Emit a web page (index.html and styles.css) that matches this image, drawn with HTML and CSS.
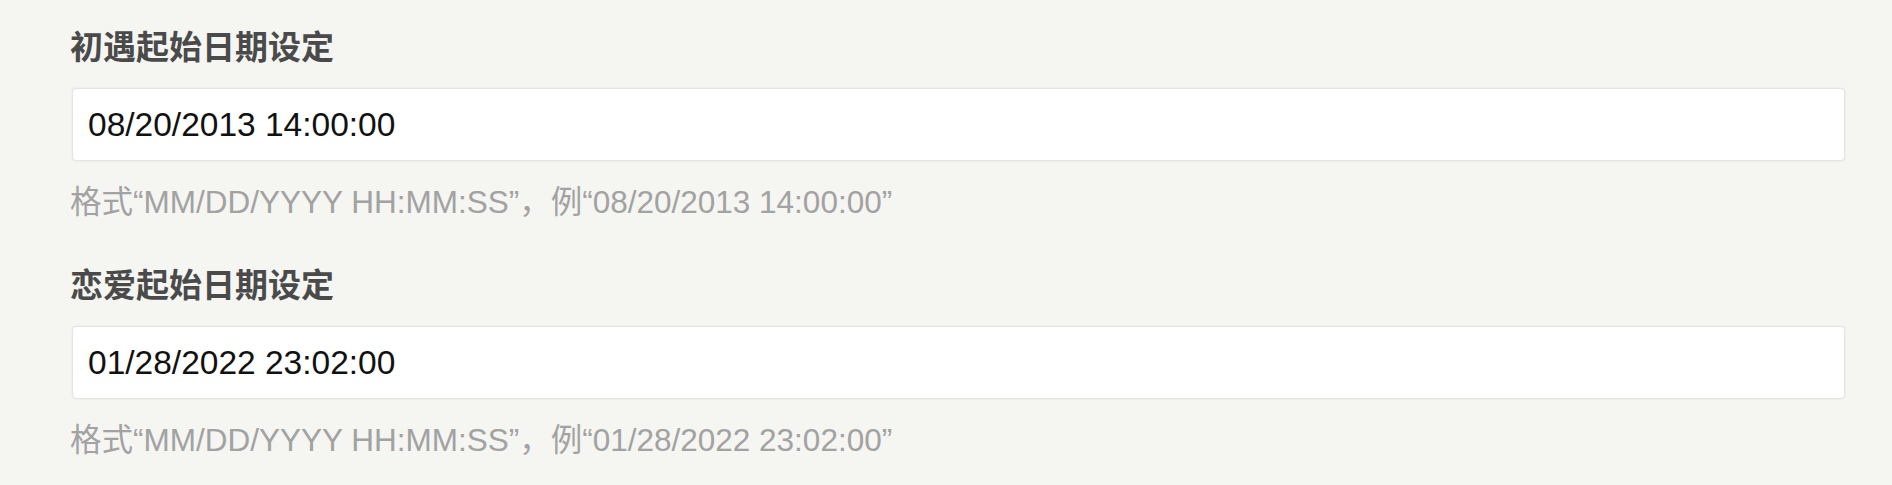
FILE: index.html
```html
<!DOCTYPE html>
<html lang="zh-CN">
<head>
<meta charset="utf-8">
<title>日期设定</title>
<link rel="stylesheet" href="styles.css">
</head>
<body>
<main class="settings">
  <section class="field">
    <label class="field-label" for="meet">初遇起始日期设定</label>
    <input class="field-input" id="meet" type="text" value="08/20/2013 14:00:00">
    <p class="field-hint">格式“MM/DD/YYYY HH:MM:SS”，例“08/20/2013 14:00:00”</p>
  </section>
  <section class="field">
    <label class="field-label" for="love">恋爱起始日期设定</label>
    <input class="field-input" id="love" type="text" value="01/28/2022 23:02:00">
    <p class="field-hint">格式“MM/DD/YYYY HH:MM:SS”，例“01/28/2022 23:02:00”</p>
  </section>
</main>
</body>
</html>
```

FILE: styles.css
```css
html, body {
  margin: 0;
  padding: 0;
  background: #f5f5f1;
}

body {
  font-family: "Liberation Sans", "Noto Sans CJK SC", sans-serif;
}

.settings {
  display: flex;
  flex-direction: column;
  gap: 41px;
  padding: 25px 47px 0 72px;
}

.field {
  display: flex;
  flex-direction: column;
}

.field-label {
  display: block;
  margin-left: -2px;
  font-family: "Noto Sans CJK SC", sans-serif;
  font-weight: 700;
  font-size: 33px;
  line-height: 40px;
  height: 40px;
  color: #4a4a4a;
}

.field-input {
  box-sizing: border-box;
  margin: 23px 0 0 0;
  height: 73px;
  width: 100%;
  padding: 0 15px;
  border: 1px solid #e4e4e1;
  border-radius: 4px;
  box-shadow: 0 0 2px rgba(0, 0, 0, 0.08);
  background: #ffffff;
  font-family: "Liberation Sans", sans-serif;
  font-size: 33.5px;
  color: #111111;
  outline: none;
}

.field-hint {
  margin: 21px 0 0 -2px;
  height: 40px;
  font-family: "Liberation Sans", "Noto Sans CJK SC", sans-serif;
  font-size: 31.5px;
  line-height: 40px;
  color: #a2a2a2;
}
```
